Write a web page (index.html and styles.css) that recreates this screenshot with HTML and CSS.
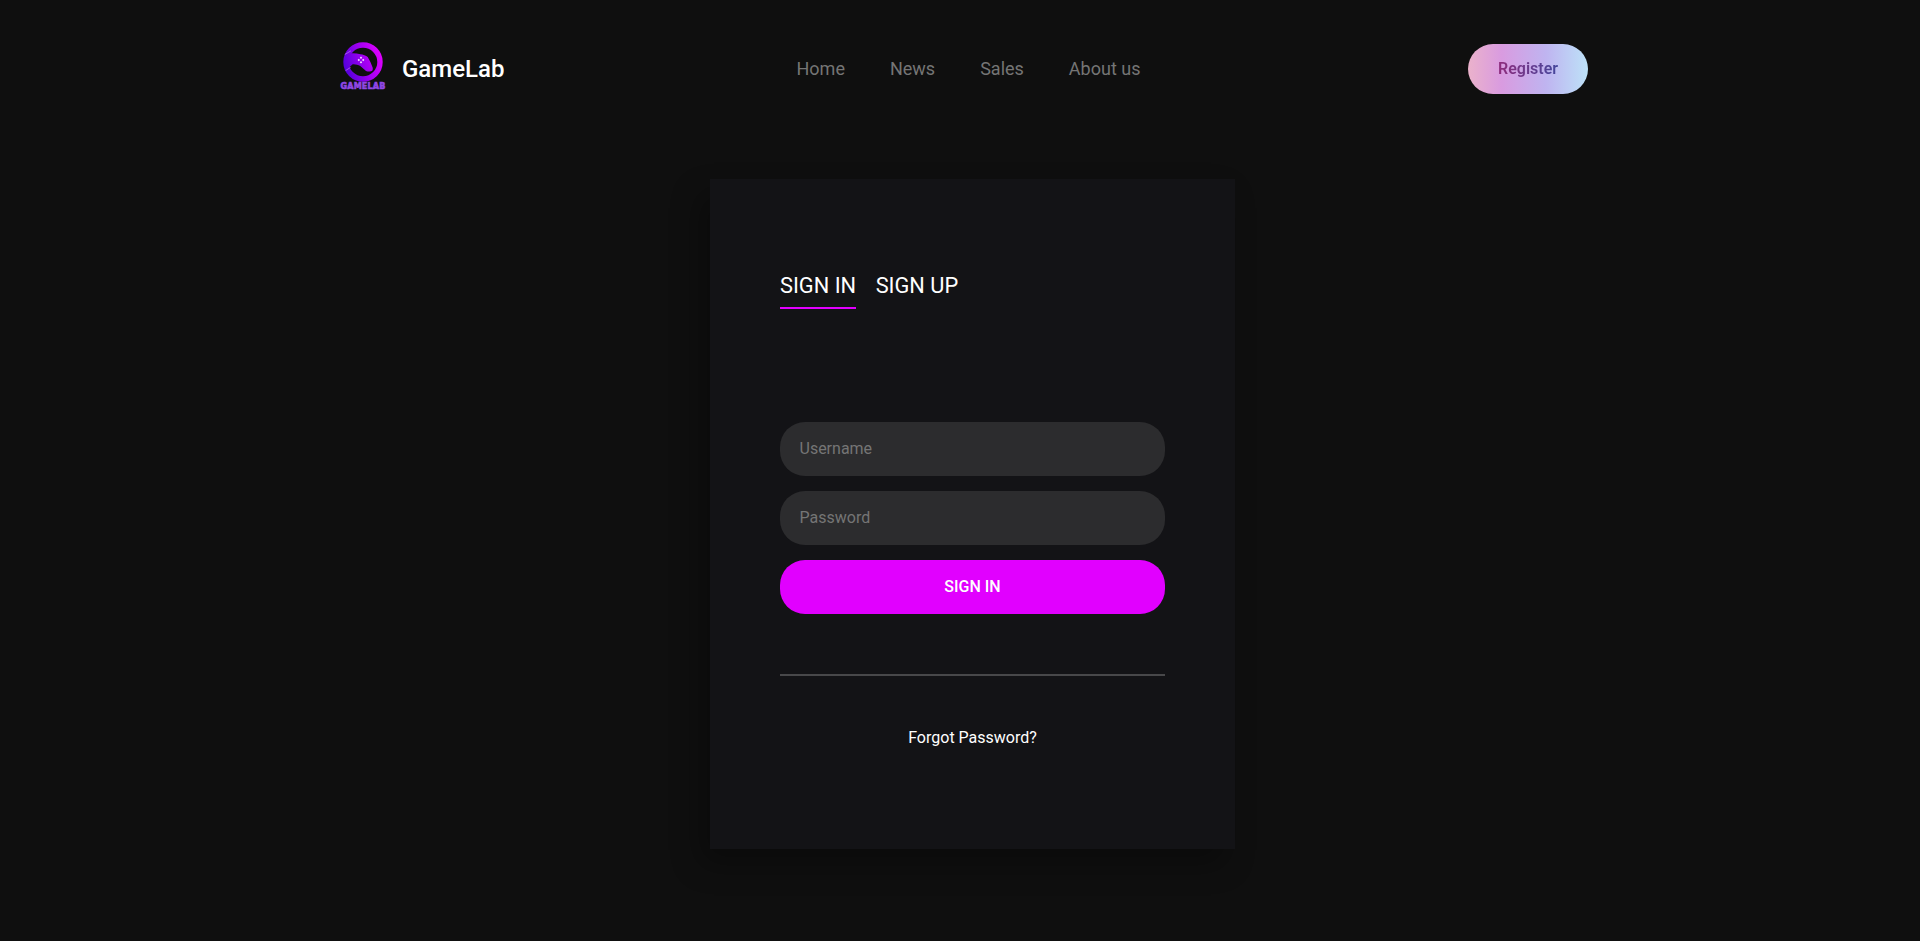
FILE: index.html
```html
<!DOCTYPE html>
<html lang="en">
<head>
<meta charset="utf-8">
<title>GameLab</title>
<link rel="stylesheet" href="styles.css">
</head>
<body>
<div class="page">
  <header class="header">
    <a class="brand" href="#">
      <span class="logo">
        <svg class="logo-mark" viewBox="0 0 46 40" width="46" height="40" aria-hidden="true">
          <defs>
            <linearGradient id="lg" gradientUnits="userSpaceOnUse" x1="4" y1="27" x2="42" y2="14">
              <stop offset="0" stop-color="#5200dc"/>
              <stop offset="0.5" stop-color="#9a00f0"/>
              <stop offset="1" stop-color="#e000ff"/>
            </linearGradient>
          </defs>
          <circle cx="23" cy="20" r="17" fill="none" stroke="url(#lg)" stroke-width="5.4"/>
          <path d="M6 13 L9.3 11.7 C13 11 17 11.5 20.3 12.3 C23 12.6 26 13.5 27.7 15 C29.5 18 31.5 22 32.7 25.7 C33.2 28 32 29.3 31 29.3 C29 29.8 27.5 29.5 26 29 L20.3 24 C18 22.8 15 22 12.7 22.3 L7 27.3 Z" fill="url(#lg)"/>
          <path d="M4.8 12.5 L11 8.8 M5.6 28.6 L10.5 25.4" stroke="#a85cec" stroke-width="0.9" fill="none"/>
          <path d="M21 14.6 l1.2 1.2 -1.2 1.2 -1.2 -1.2 z M21 19 l1.2 1.2 -1.2 1.2 -1.2 -1.2 z M18.8 16.8 l1.2 1.2 -1.2 1.2 -1.2 -1.2 z M23.2 16.8 l1.2 1.2 -1.2 1.2 -1.2 -1.2 z" fill="#f4e2ff"/>
        </svg>
        <span class="logo-word">GAMELAB</span>
      </span>
      <span class="brand-name">GameLab</span>
    </a>
    <nav class="nav">
      <a href="#">Home</a>
      <a href="#">News</a>
      <a href="#">Sales</a>
      <a href="#">About us</a>
    </nav>
    <a class="register" href="#"><span>Register</span></a>
  </header>
  <main class="main">
    <section class="card">
      <div class="tabs">
        <a class="tab tab-active" href="#">SIGN IN</a>
        <a class="tab" href="#">SIGN UP</a>
      </div>
      <form class="form">
        <input class="field" type="text" placeholder="Username">
        <input class="field" type="password" placeholder="Password">
        <button class="submit" type="button">SIGN IN</button>
      </form>
      <div class="rule"></div>
      <a class="forgot" href="#">Forgot Password?</a>
    </section>
  </main>
</div>
</body>
</html>
```
FILE: styles.css
```css
* { box-sizing: border-box; }
html, body { margin: 0; height: 100%; }
body {
  background: #0f0f0f;
  color: #fff;
  font-family: Roboto, "Liberation Sans", sans-serif;
  overflow: hidden;
}
a { color: inherit; text-decoration: none; }
.page { width: 1256px; margin: 0 auto; }

.header {
  display: grid;
  grid-template-columns: 1fr auto 1fr;
  align-items: center;
  height: 137px;
  padding-left: 8px;
}
.brand { display: flex; align-items: center; gap: 16px; justify-self: start; }
.logo { display: flex; flex-direction: column; align-items: center; width: 46px; padding-bottom: 4px; }
.logo-mark { display: block; }
.logo-word {
  font-family: "DejaVu Sans", sans-serif;
  font-size: 8px;
  line-height: 10px;
  font-weight: 700;
  letter-spacing: 0.2px;
  color: #9148e6;
  -webkit-text-stroke: 0.6px #9148e6;
}
.brand-name { font-size: 24px; font-weight: 500; line-height: 28px; }
.nav { display: flex; gap: 45px; margin-left: 9px; font-size: 18px; line-height: 22px; color: #757575; }
.register {
  justify-self: end;
  display: flex;
  align-items: center;
  justify-content: center;
  width: 120px;
  height: 50px;
  border-radius: 25px;
  background: linear-gradient(90deg, #ebb2cb 0%, #d99be0 28%, #bfb4f0 65%, #bde2f8 100%);
  font-size: 16px;
  font-weight: 600;
}
.register span {
  background: linear-gradient(90deg, #8f2c7c, #44479c);
  -webkit-background-clip: text;
  background-clip: text;
  color: transparent;
}

.main { display: flex; justify-content: center; padding-left: 25px; padding-top: 42px; }
.card {
  width: 525px;
  height: 670px;
  padding: 92px 70px 0;
  background: #131316;
  box-shadow: -10px 15px 28px rgba(0, 0, 0, 0.3);
}
.tabs { display: flex; gap: 19.5px; height: 38px; }
.tab { font-size: 21.8px; line-height: 30px; height: 38px; }
.tab-active { border-bottom: 2px solid #e100ff; }
.form { display: flex; flex-direction: column; gap: 15px; margin-top: 113px; }
.field {
  width: 100%;
  height: 54px;
  padding: 0 20px 2px 19.5px;
  border: 0;
  border-radius: 25px;
  background: #2c2c2e;
  color: #fff;
  font: 400 16px Roboto, sans-serif;
  outline: none;
}
.field::placeholder { color: #757575; opacity: 1; }
.submit {
  height: 54px;
  padding: 0 0 2px;
  border: 0;
  border-radius: 25px;
  background: #e100ff;
  color: #fff;
  font: 500 16px Roboto, sans-serif;
}
.rule { height: 2px; margin-top: 60px; background: #48484a; }
.forgot { display: block; margin-top: 52px; text-align: center; font-size: 16px; line-height: 20px; color: #fff; }
```
